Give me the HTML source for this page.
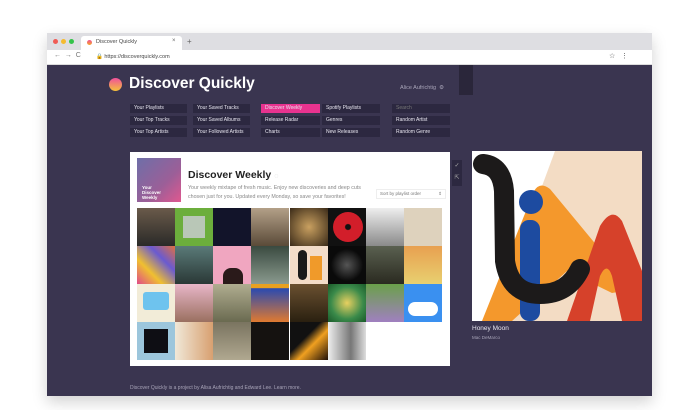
<!DOCTYPE html>
<html><head><style>
*{margin:0;padding:0;box-sizing:border-box}
body{width:700px;height:410px;background:#fff;position:relative;overflow:hidden;font-family:"Liberation Sans",sans-serif}
.a{position:absolute}
.win{left:47px;top:33px;width:605px;height:363px;box-shadow:0 6px 14px rgba(0,0,0,.18);background:#3a3550}
.nav div{position:absolute;height:9px;background:#2c2840;color:#e8e6f0;font-size:5px;line-height:9px;padding-left:4px;white-space:nowrap}
.t{position:absolute;width:38px;height:38px}
</style></head><body>
<div class="a win"></div>
<div class="a" style="left:47px;top:33px;width:605px;height:17px;background:#dedee2"></div>
<div class="a" style="left:53px;top:39px;width:5px;height:5px;border-radius:50%;background:#f05b55"></div>
<div class="a" style="left:61px;top:39px;width:5px;height:5px;border-radius:50%;background:#f5bb30"></div>
<div class="a" style="left:69px;top:39px;width:5px;height:5px;border-radius:50%;background:#34c34a"></div>
<div class="a" style="left:81px;top:36px;width:101px;height:14px;background:#fff;border-radius:3px 3px 0 0"></div>
<div class="a" style="left:87px;top:40px;width:5px;height:5px;border-radius:50%;background:linear-gradient(#f0509b,#f5a623)"></div>
<div class="a" style="left:96px;top:39px;font-size:5.5px;color:#444">Discover Quickly</div>
<div class="a" style="left:172px;top:38px;font-size:6px;color:#666">×</div>
<div class="a" style="left:187px;top:37px;font-size:8px;color:#666">+</div>
<div class="a" style="left:47px;top:50px;width:605px;height:15px;background:#fff;border-bottom:1px solid #ddd"></div>
<div class="a" style="left:54px;top:52px;font-size:7px;color:#777">←&nbsp;&nbsp;→&nbsp;&nbsp;C</div>
<div class="a" style="left:96px;top:54px;font-size:5.5px;color:#444">🔒 https://discoverquickly.com</div>
<div class="a" style="left:609px;top:52px;font-size:7px;color:#555">☆&nbsp;&nbsp;&nbsp;⋮</div>

<div class="a" style="left:459px;top:65px;width:14px;height:30px;background:#2a263a"></div>
<div class="a" style="left:109px;top:78px;width:13px;height:13px;border-radius:50%;background:linear-gradient(#f0509b,#f5c13a)"></div>
<div class="a" style="left:129px;top:75px;font-size:15.5px;font-weight:bold;color:#fff">Discover Quickly</div>
<div class="a" style="left:400px;top:85px;font-size:5.5px;color:#a8a4b8">Alice Aufrichtig &nbsp;⚙</div>

<div class="nav">
<div style="left:130px;top:104px;width:57px">Your Playlists</div>
<div style="left:130px;top:116px;width:57px">Your Top Tracks</div>
<div style="left:130px;top:128px;width:57px">Your Top Artists</div>
<div style="left:193px;top:104px;width:57px">Your Saved Tracks</div>
<div style="left:193px;top:116px;width:57px">Your Saved Albums</div>
<div style="left:193px;top:128px;width:57px">Your Followed Artists</div>
<div style="left:261px;top:104px;width:59px;background:#e8338f">Discover Weekly</div>
<div style="left:261px;top:116px;width:59px">Release Radar</div>
<div style="left:261px;top:128px;width:59px">Charts</div>
<div style="left:322px;top:104px;width:58px">Spotify Playlists</div>
<div style="left:322px;top:116px;width:58px">Genres</div>
<div style="left:322px;top:128px;width:58px">New Releases</div>
<div style="left:392px;top:104px;width:58px;color:#777">Search</div>
<div style="left:392px;top:116px;width:58px">Random Artist</div>
<div style="left:392px;top:128px;width:58px">Random Genre</div>
</div>

<div class="a" style="left:130px;top:152px;width:320px;height:214px;background:#fff"></div>
<div class="a" style="left:137px;top:158px;width:44px;height:44px;background:linear-gradient(135deg,#6e6fa8,#9b5f98 60%,#e0588f);"></div>
<div class="a" style="left:142px;top:185px;font-size:4.5px;color:#fff;font-weight:bold;line-height:5px">Your<br>Discover<br>Weekly</div>
<div class="a" style="left:188px;top:169px;font-size:10.5px;font-weight:bold;color:#222">Discover Weekly <span style="color:#ccc;font-size:7px">◌</span></div>
<div class="a" style="left:188px;top:184px;width:185px;font-size:5.3px;line-height:9px;color:#888">Your weekly mixtape of fresh music. Enjoy new discoveries and deep cuts chosen just for you. Updated every Monday, so save your favorites!</div>
<div class="a" style="left:376px;top:189px;width:70px;height:10px;border:1px solid #eee;font-size:4.5px;color:#777;line-height:8px;padding-left:3px">Sort by playlist order<span style="float:right;padding-right:3px">⇕</span></div>

<div class="t" style="left:137px;top:208px;background:linear-gradient(#6a5a4a,#2a2a28)"></div>
<div class="t" style="left:175px;top:208px;background:#6cae3c"><div class="a" style="left:8px;top:8px;width:22px;height:22px;background:#b9c7b7"></div></div>
<div class="t" style="left:213px;top:208px;background:#12142a"></div>
<div class="t" style="left:251px;top:208px;background:linear-gradient(#b3a088,#5a4a38)"></div>
<div class="t" style="left:290px;top:208px;background:radial-gradient(#c9a060,#3a2a18)"></div>
<div class="t" style="left:328px;top:208px;background:#111"><div class="a" style="left:5px;top:4px;width:30px;height:30px;border-radius:50%;background:radial-gradient(#111 12%,#d21e2a 16%)"></div></div>
<div class="t" style="left:366px;top:208px;background:linear-gradient(#eee,#8a8a8a)"></div>
<div class="t" style="left:404px;top:208px;background:#ded2bd"></div>

<div class="t" style="left:137px;top:246px;background:linear-gradient(45deg,#e04a8a,#f0c030,#6a5ad0,#e07040)"></div>
<div class="t" style="left:175px;top:246px;background:linear-gradient(#5a7a78,#2a3836)"></div>
<div class="t" style="left:213px;top:246px;background:#f0a6c0"><div class="a" style="left:10px;top:22px;width:20px;height:16px;border-radius:8px 8px 0 0;background:#2a1a1a"></div></div>
<div class="t" style="left:251px;top:246px;background:linear-gradient(#3a4a40,#8a9a8e)"></div>
<div class="t" style="left:290px;top:246px;background:#f3dcc8"><div class="a" style="left:8px;top:4px;width:9px;height:30px;border-radius:5px;background:#1a1a1a"></div><div class="a" style="left:20px;top:10px;width:12px;height:24px;background:#f09a2a"></div></div>
<div class="t" style="left:328px;top:246px;background:radial-gradient(#555,#0a0a0a 60%)"></div>
<div class="t" style="left:366px;top:246px;background:linear-gradient(#5a6050,#2a2a20)"></div>
<div class="t" style="left:404px;top:246px;background:linear-gradient(#e8a050,#e8d070)"></div>

<div class="t" style="left:137px;top:284px;background:#f2ecd8"><div class="a" style="left:6px;top:8px;width:26px;height:18px;border-radius:3px;background:#6ec3ee"></div></div>
<div class="t" style="left:175px;top:284px;background:linear-gradient(#e8b6c8,#9a7060)"></div>
<div class="t" style="left:213px;top:284px;background:linear-gradient(#b0ad90,#6a6a50)"></div>
<div class="t" style="left:251px;top:284px;background:linear-gradient(#e8a020 10%,#2a4ab0 12%,#e07a30)"></div>
<div class="t" style="left:290px;top:284px;background:linear-gradient(#6a5030,#2a2010)"></div>
<div class="t" style="left:328px;top:284px;background:radial-gradient(#e8d060,#3a8a4a 60%,#1a5a2a)"></div>
<div class="t" style="left:366px;top:284px;background:linear-gradient(#6aa04a,#a080c0)"></div>
<div class="t" style="left:404px;top:284px;background:#3a90f0"><div class="a" style="left:4px;top:18px;width:30px;height:14px;border-radius:7px;background:#fff"></div></div>

<div class="t" style="left:137px;top:322px;background:#9cc6dc"><div class="a" style="left:7px;top:7px;width:24px;height:24px;background:#0e0e14"></div></div>
<div class="t" style="left:175px;top:322px;background:linear-gradient(90deg,#f0e8d8,#d8a070)"></div>
<div class="t" style="left:213px;top:322px;background:linear-gradient(#7a7460,#b0a890)"></div>
<div class="t" style="left:251px;top:322px;background:#151210"></div>
<div class="t" style="left:290px;top:322px;background:linear-gradient(135deg,#111 40%,#f0a020 60%,#201008)"></div>
<div class="t" style="left:328px;top:322px;background:linear-gradient(90deg,#eee,#777 60%,#ddd)"></div>

<div class="a" style="left:452px;top:160px;width:10px;height:26px;background:#2c2840;color:#aaa;font-size:6px;text-align:center;line-height:12px">✓<br>⇱</div>

<svg class="a" style="left:472px;top:151px" width="170" height="170" viewBox="0 0 170 170">
<rect width="170" height="170" fill="#fff"/>
<polygon points="83,0 170,0 170,170 20,170" fill="#f3dcc4"/>
<path d="M10,170 L62,40 Q68,30 78,38 L150,125 Q158,140 140,142 L95,120 L40,170Z" fill="#f4982c"/>
<path d="M95,170 L128,75 Q140,55 150,70 L170,120 L170,170 L150,170 L140,125 Q135,110 128,125 L118,170Z" fill="#d6412a"/>
<rect x="48" y="69" width="20" height="101" rx="9" fill="#1d4ba0"/>
<circle cx="59" cy="51" r="12" fill="#1d4ba0"/>
<path d="M11,13 Q30,15 32,40 L33,110 Q38,143 68,143 Q96,143 108,118" fill="none" stroke="#1c1a1a" stroke-width="20" stroke-linecap="round"/>
</svg>
<div class="a" style="left:472px;top:325px;font-size:6.5px;color:#e8e6f0">Honey Moon</div>
<div class="a" style="left:472px;top:335px;font-size:4.5px;color:#a8a4b8">Mac DeMarco</div>

<div class="a" style="left:130px;top:385px;font-size:5px;color:#a8a4b8">Discover Quickly is a project by Alisa Aufrichtig and Edward Lee. Learn more.</div>
</body></html>
